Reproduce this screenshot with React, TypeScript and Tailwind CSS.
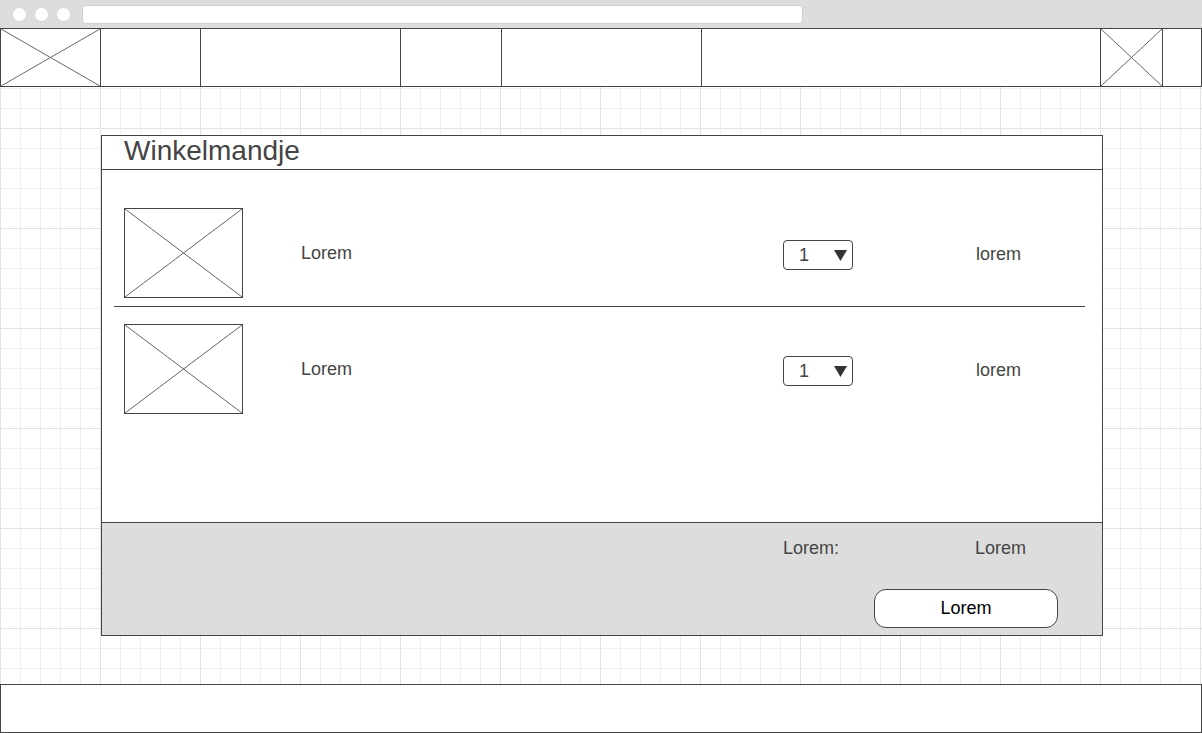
import React from "react";

function CrossBox({ className = "" }: { className?: string }) {
    return (
        <div className={"relative bg-white " + className}>
            <svg className="absolute inset-0 w-full h-full" viewBox="0 0 100 100" preserveAspectRatio="none">
                <line x1="0" y1="0" x2="100" y2="100" stroke="#666" strokeWidth="1" vectorEffect="non-scaling-stroke" />
                <line x1="100" y1="0" x2="0" y2="100" stroke="#666" strokeWidth="1" vectorEffect="non-scaling-stroke" />
            </svg>
        </div>
    );
}

function QtySelect() {
    return (
        <div className="w-[70px] h-[30px] border border-[#444] rounded-[4px] bg-white flex items-center pl-[15px] text-[18px] text-[#444]">
            <span className="w-[35px]">1</span>
            <svg width="13" height="11" viewBox="0 0 13 11">
                <polygon points="0,0 13,0 6.5,11" fill="#333" />
            </svg>
        </div>
    );
}

function CartRow() {
    return (
        <div className="flex items-center pl-[22px]">
            <CrossBox className="w-[119px] h-[90px] border border-[#444]" />
            <div className="ml-[58px] w-[482px] text-[18px] text-[#444]">Lorem</div>
            <div className="mt-[4px]">
                <QtySelect />
            </div>
            <div className="ml-[123px] mt-[2px] text-[18px] text-[#444]">lorem</div>
        </div>
    );
}

export default function App() {
    return (
        <div className="w-[1202px] h-[733px] overflow-hidden bg-white font-['Liberation_Sans',Arial,sans-serif]">
            {/* browser chrome */}
            <div className="h-[28px] bg-[#dddddd] flex items-center pl-[13px]">
                <div className="flex gap-[9px]">
                    <div className="w-[13px] h-[13px] rounded-full bg-white"></div>
                    <div className="w-[13px] h-[13px] rounded-full bg-white"></div>
                    <div className="w-[13px] h-[13px] rounded-full bg-white"></div>
                </div>
                <div className="ml-[12px] w-[721px] h-[19px] rounded-[4px] bg-white border border-[#cfcfcf]"></div>
            </div>

            <div className="h-[705px] flex flex-col [background-image:linear-gradient(to_right,#e2e2e2_1px,transparent_1px),linear-gradient(to_bottom,#e2e2e2_1px,transparent_1px),linear-gradient(to_right,#efefef_1px,transparent_1px),linear-gradient(to_bottom,#efefef_1px,transparent_1px)] [background-size:100px_100px,100px_100px,20px_20px,20px_20px]">
                {/* nav */}
                <nav className="h-[59px] flex bg-white border border-[#444]">
                    <CrossBox className="w-[100px] border-r border-[#444]" />
                    <div className="w-[100px] border-r border-[#444]"></div>
                    <div className="w-[200px] border-r border-[#444]"></div>
                    <div className="w-[101px] border-r border-[#444]"></div>
                    <div className="w-[200px] border-r border-[#444]"></div>
                    <div className="w-[399px] border-r border-[#444]"></div>
                    <CrossBox className="w-[62px] border-r border-[#444]" />
                    <div className="flex-1"></div>
                </nav>

                {/* cart */}
                <section className="ml-[101px] mt-[48px] w-[1002px] h-[501px] border border-[#444] bg-white flex flex-col">
                    <div className="h-[34px] border-b border-[#444] pl-[22px] flex items-center">
                        <h1 className="text-[28px] leading-none text-[#444] -mt-[3px]">Winkelmandje</h1>
                    </div>
                    <div className="flex-1 pt-[38px]">
                        <CartRow />
                        <div className="ml-[12px] mr-[17px] mt-[8px] mb-[17px] h-px bg-[#444]"></div>
                        <CartRow />
                    </div>
                    <div className="h-[113px] bg-[#dddddd] border-t border-[#444] flex flex-col">
                        <div className="flex pl-[681px] pt-[12px] text-[18px] text-[#444]">
                            <span className="w-[192px]">Lorem:</span>
                            <span>Lorem</span>
                        </div>
                        <div className="mt-[27px] ml-[772px]">
                            <button className="w-[184px] h-[39px] rounded-[12px] border border-[#444] bg-white text-[18px] text-black">
                                Lorem
                            </button>
                        </div>
                    </div>
                </section>

                <footer className="mt-[48px] h-[49px] border border-[#444] bg-white"></footer>
            </div>
        </div>
    );
}
